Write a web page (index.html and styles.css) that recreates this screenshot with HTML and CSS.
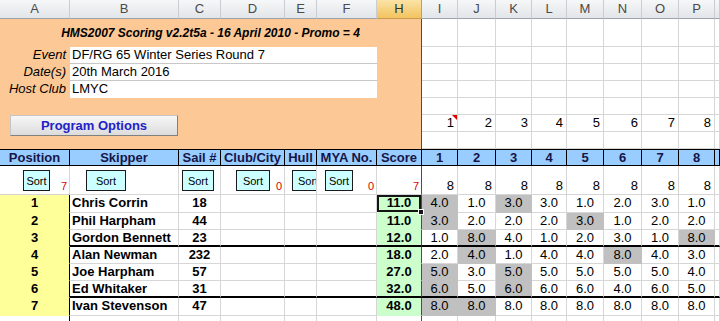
FILE: index.html
```html
<!DOCTYPE html>
<html lang="en">
<head>
    <meta charset="UTF-8">
    <meta name="viewport" content="width=device-width, initial-scale=1.0">
    <title>HMS2007 Scoring</title>
    <link rel="stylesheet" href="styles.css">
</head>
<body>

<div class="sheet">
    <!-- column letters -->
    <div class="ch">A</div><div class="ch">B</div><div class="ch">C</div><div class="ch">D</div><div class="ch">E</div><div class="ch">F</div><div class="ch on">H</div>
    <div class="ch">I</div><div class="ch">J</div><div class="ch">K</div><div class="ch">L</div><div class="ch">M</div><div class="ch">N</div><div class="ch">O</div><div class="ch">P</div><div class="ch"></div>

    <!-- event panel -->
    <div class="panel">
        <div class="title">HMS2007 Scoring v2.2t5a - 16 April 2010 - Promo = 4</div>
        <div class="info"><span class="label">Event</span><span class="value">DF/RG 65 Winter Series Round 7</span></div>
        <div class="info"><span class="label">Date(s)</span><span class="value">20th March 2016</span></div>
        <div class="info"><span class="label">Host Club</span><span class="value last">LMYC</span></div>
        <button type="button" class="prog">Program Options</button>
    </div>

    <!-- empty cells right of the panel -->
    <div class="c"></div><div class="c"></div><div class="c"></div><div class="c"></div><div class="c"></div><div class="c"></div><div class="c"></div><div class="c"></div><div class="c"></div>
    <div class="c"></div><div class="c"></div><div class="c"></div><div class="c"></div><div class="c"></div><div class="c"></div><div class="c"></div><div class="c"></div><div class="c"></div>
    <div class="c"></div><div class="c"></div><div class="c"></div><div class="c"></div><div class="c"></div><div class="c"></div><div class="c"></div><div class="c"></div><div class="c"></div>
    <div class="c"></div><div class="c"></div><div class="c"></div><div class="c"></div><div class="c"></div><div class="c"></div><div class="c"></div><div class="c"></div><div class="c"></div>
    <div class="c"></div><div class="c"></div><div class="c"></div><div class="c"></div><div class="c"></div><div class="c"></div><div class="c"></div><div class="c"></div><div class="c"></div>
    <div class="c num note">1</div><div class="c num">2</div><div class="c num">3</div><div class="c num">4</div><div class="c num">5</div><div class="c num">6</div><div class="c num">7</div><div class="c num">8</div><div class="c"></div>
    <div class="c"></div><div class="c"></div><div class="c"></div><div class="c"></div><div class="c"></div><div class="c"></div><div class="c"></div><div class="c"></div><div class="c"></div>

    <!-- table header -->
    <div class="hd">Position</div><div class="hd">Skipper</div><div class="hd">Sail #</div><div class="hd">Club/City</div><div class="hd">Hull</div><div class="hd">MYA No.</div><div class="hd">Score</div>
    <div class="hd">1</div><div class="hd">2</div><div class="hd">3</div><div class="hd">4</div><div class="hd">5</div><div class="hd">6</div><div class="hd">7</div><div class="hd">8</div><div class="hd"></div>

    <!-- sort row -->
    <div class="c srt"><button type="button" class="sort s-pos">Sort</button><span class="cnt">7</span></div>
    <div class="c srt"><button type="button" class="sort s-name">Sort</button></div>
    <div class="c srt"><button type="button" class="sort s-sail">Sort</button></div>
    <div class="c srt"><button type="button" class="sort s-club">Sort</button><span class="cnt">0</span></div>
    <div class="c srt"><button type="button" class="sort s-hull">Sort</button></div>
    <div class="c srt"><button type="button" class="sort s-mya">Sort</button><span class="cnt">0</span></div>
    <div class="c srt pane"><span class="cnt">7</span></div>
    <div class="c srt"><span class="cnt black">8</span></div><div class="c srt"><span class="cnt black">8</span></div><div class="c srt"><span class="cnt black">8</span></div><div class="c srt"><span class="cnt black">8</span></div>
    <div class="c srt"><span class="cnt black">8</span></div><div class="c srt"><span class="cnt black">8</span></div><div class="c srt"><span class="cnt black">8</span></div><div class="c srt"><span class="cnt black">8</span></div><div class="c"></div>

    <!-- results -->
    <div class="c pos">1</div><div class="c name">Chris Corrin</div><div class="c sail">18</div><div class="c"></div><div class="c"></div><div class="c"></div><div class="c score sel">11.0</div>
    <div class="c race drop">4.0</div><div class="c race">1.0</div><div class="c race drop">3.0</div><div class="c race">3.0</div><div class="c race">1.0</div><div class="c race">2.0</div><div class="c race">3.0</div><div class="c race">1.0</div><div class="c"></div>

    <div class="c pos">2</div><div class="c name">Phil Harpham</div><div class="c sail">44</div><div class="c"></div><div class="c"></div><div class="c"></div><div class="c score">11.0</div>
    <div class="c race drop">3.0</div><div class="c race">2.0</div><div class="c race">2.0</div><div class="c race">2.0</div><div class="c race drop">3.0</div><div class="c race">1.0</div><div class="c race">2.0</div><div class="c race">2.0</div><div class="c"></div>

    <div class="c pos">3</div><div class="c name rule">Gordon Bennett</div><div class="c sail rule">23</div><div class="c rule"></div><div class="c rule"></div><div class="c rule"></div><div class="c score rule">12.0</div>
    <div class="c race rule">1.0</div><div class="c race drop rule">8.0</div><div class="c race rule">4.0</div><div class="c race rule">1.0</div><div class="c race rule">2.0</div><div class="c race rule">3.0</div><div class="c race rule">1.0</div><div class="c race drop rule">8.0</div><div class="c rule"></div>

    <div class="c pos">4</div><div class="c name">Alan Newman</div><div class="c sail">232</div><div class="c"></div><div class="c"></div><div class="c"></div><div class="c score">18.0</div>
    <div class="c race">2.0</div><div class="c race drop">4.0</div><div class="c race">1.0</div><div class="c race">4.0</div><div class="c race">4.0</div><div class="c race drop">8.0</div><div class="c race">4.0</div><div class="c race">3.0</div><div class="c"></div>

    <div class="c pos">5</div><div class="c name">Joe Harpham</div><div class="c sail">57</div><div class="c"></div><div class="c"></div><div class="c"></div><div class="c score">27.0</div>
    <div class="c race drop">5.0</div><div class="c race">3.0</div><div class="c race drop">5.0</div><div class="c race">5.0</div><div class="c race">5.0</div><div class="c race">5.0</div><div class="c race">5.0</div><div class="c race">4.0</div><div class="c"></div>

    <div class="c pos">6</div><div class="c name rule">Ed Whitaker</div><div class="c sail rule">31</div><div class="c rule"></div><div class="c rule"></div><div class="c rule"></div><div class="c score rule">32.0</div>
    <div class="c race drop rule">6.0</div><div class="c race rule">5.0</div><div class="c race drop rule">6.0</div><div class="c race rule">6.0</div><div class="c race rule">6.0</div><div class="c race rule">4.0</div><div class="c race rule">6.0</div><div class="c race rule">5.0</div><div class="c rule"></div>

    <div class="c pos">7</div><div class="c name">Ivan Stevenson</div><div class="c sail">47</div><div class="c"></div><div class="c"></div><div class="c"></div><div class="c score">48.0</div>
    <div class="c race drop">8.0</div><div class="c race drop">8.0</div><div class="c race">8.0</div><div class="c race">8.0</div><div class="c race">8.0</div><div class="c race">8.0</div><div class="c race">8.0</div><div class="c race">8.0</div><div class="c"></div>

    <div class="c edge"></div><div class="c"></div><div class="c"></div><div class="c"></div><div class="c"></div><div class="c"></div><div class="c pane"></div>
    <div class="c"></div><div class="c"></div><div class="c"></div><div class="c"></div><div class="c"></div><div class="c"></div><div class="c"></div><div class="c"></div><div class="c"></div>
</div>

</body>
</html>
```

FILE: styles.css
```css
body {
    margin: 0;
    padding: 0;
    font-family: "Liberation Sans", Arial, sans-serif;
    font-size: 13px;
    color: #000;
    background: #fff;
    overflow: hidden;
}

.sheet {
    display: grid;
    grid-template-columns: 70px 109px 42px 64px 32px 60px 45px 36px 38px 36px 35px 37px 38px 37px 36px 1fr;
    grid-template-rows: 19px 28px repeat(6, 17px) 17px 29px 18px repeat(5, 17px) 18px 17px;
    width: 720px;
    height: 321px;
    overflow: hidden;
}

/* column letters */
.ch {
    box-sizing: border-box;
    background: linear-gradient(#f6f7f8, #e2e5e9);
    border-right: 1px solid #c9ccd1;
    border-bottom: 1px solid #9ea3ab;
    color: #4a4a4a;
    font-size: 13px;
    line-height: 18px;
    text-align: center;
}

.ch.on {
    background: linear-gradient(#fae3a6, #f3c35f);
    border-right-color: #c99d4c;
    border-bottom-color: #c99d4c;
    color: #333;
}

/* orange block */
.panel {
    grid-column: 1 / 8;
    grid-row: 2 / 9;
    box-sizing: border-box;
    background-color: #fcc895;
    border-right: 1px solid #4d4d4d;
}

.title {
    height: 28px;
    line-height: 29px;
    text-align: center;
    font-size: 12px;
    font-weight: bold;
    font-style: italic;
}

.info {
    display: flex;
    height: 17px;
    line-height: 16px;
}

.label {
    width: 70px;
    box-sizing: border-box;
    padding-right: 4px;
    text-align: right;
    font-style: italic;
}

.value {
    width: 307px;
    box-sizing: border-box;
    padding-left: 2px;
    background: #fff;
    border-bottom: 1px solid #c8c8c8;
}

.value.last {
    border-bottom: none;
}

.prog {
    display: block;
    margin: 17px 0 0 10px;
    width: 168px;
    height: 21px;
    padding: 0;
    font-family: "Liberation Sans", Arial, sans-serif;
    font-size: 13px;
    font-weight: bold;
    color: #2222c8;
    background: linear-gradient(#f7f7f7, #dcdcdc);
    border: 1px solid #c4c4c4;
    border-right-color: #808080;
    border-bottom-color: #808080;
}

/* plain cells */
.c {
    box-sizing: border-box;
    border-right: 1px solid #d6d6d6;
    border-bottom: 1px solid #d6d6d6;
    line-height: 16px;
    white-space: nowrap;
    overflow: hidden;
    padding: 0 2px;
}

.num {
    text-align: right;
    padding-right: 3px;
}

.note {
    position: relative;
}

.note::after {
    content: "";
    position: absolute;
    top: 0;
    right: 0;
    border-top: 5px solid #e00000;
    border-left: 5px solid transparent;
}

/* blue heading row */
.hd {
    box-sizing: border-box;
    background: #99ccff;
    border-top: 1px solid #000;
    border-bottom: 1px solid #000;
    border-right: 1px solid #000;
    color: #151548;
    font-weight: bold;
    line-height: 15px;
    text-align: center;
    white-space: nowrap;
    overflow: hidden;
}

/* sort buttons */
.srt {
    display: flex;
    align-items: flex-start;
    padding: 0;
}

.sort {
    margin-top: 4px;
    height: 21px;
    padding: 0;
    flex: none;
    font-family: "Liberation Sans", Arial, sans-serif;
    font-size: 11px;
    color: #000;
    background: #ccffff;
    border: 1px solid #1a1a1a;
    overflow: hidden;
    white-space: nowrap;
}

.s-pos { margin-left: 23px; width: 27px; }
.s-name { margin-left: 16px; width: 40px; }
.s-sail { margin-left: 3px; width: 32px; }
.s-club { margin-left: 15px; width: 34px; }
.s-hull { margin-left: 7px; width: 25px; padding-left: 5px; text-align: left; }
.s-mya { margin-left: 8px; width: 28px; }

.cnt {
    margin-left: auto;
    align-self: flex-end;
    padding: 0 2px 1px 0;
    color: #d40000;
    font-size: 11px;
    line-height: 13px;
}

.cnt.black {
    color: #000;
    font-size: 13px;
    line-height: 16px;
    padding-right: 3px;
    padding-bottom: 0;
}

/* results */
.pos {
    background: #ffff99;
    border-right-color: #000;
    border-bottom-color: #ffff99;
    font-weight: bold;
    text-align: center;
}

.edge {
    border-right-color: #000;
}

.name {
    font-weight: bold;
}

.sail {
    font-weight: bold;
    text-align: center;
}

.score {
    background: #ccffcc;
    border-bottom-color: #ccffcc;
    font-weight: bold;
    text-align: center;
}

.score, .pane {
    border-right: 1px solid #4d4d4d;
}

.race {
    text-align: center;
}

.drop {
    background: #c0c0c0;
    border-color: #c0c0c0;
}

.rule {
    border-bottom: 2px solid #000;
}

.sel {
    position: relative;
    z-index: 1;
    overflow: visible;
    box-shadow: inset 0 0 0 2px #151515;
}

.sel::after {
    content: "";
    position: absolute;
    right: -3px;
    bottom: -3px;
    width: 4px;
    height: 4px;
    background: #151515;
    border: 1px solid #fff;
}
```
